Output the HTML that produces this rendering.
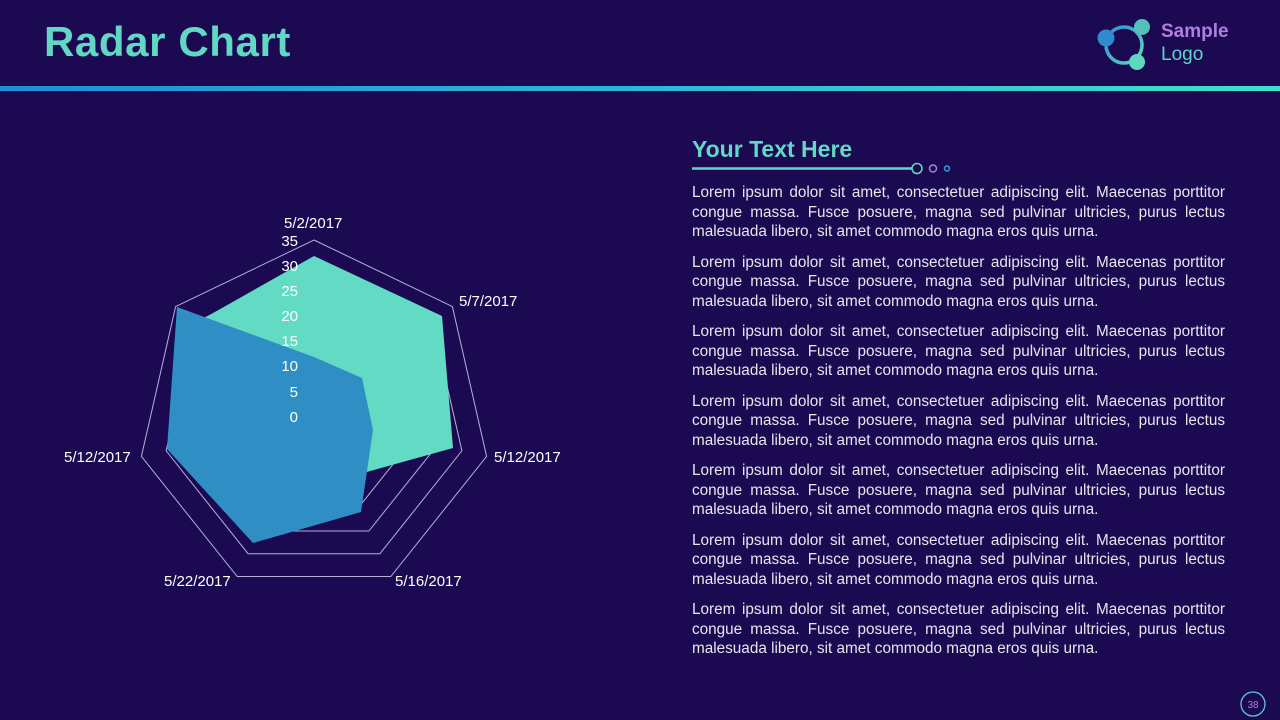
<!DOCTYPE html>
<html><head><meta charset="utf-8"><style>
html,body{margin:0;padding:0}
body{width:1280px;height:720px;background:#1b0a52;position:relative;overflow:hidden;font-family:"Liberation Sans",sans-serif}
.title{position:absolute;left:44px;top:18px;font-size:42px;font-weight:bold;color:#62d8c4;letter-spacing:0.6px}
.bar{position:absolute;left:0;top:86px;width:1280px;height:5px;background:linear-gradient(90deg,#1d8fd2,#2fc0d8 60%,#3fe0cc)}
.h2{position:absolute;left:692px;top:136px;font-size:23px;font-weight:bold;color:#62d8c4}
.txt{position:absolute;left:692px;top:183px;width:533px;color:#e6e6ee;font-size:15.3px;line-height:19.5px}
.p{margin-bottom:11px}
.l{display:block;text-align:justify;text-align-last:justify;white-space:nowrap}
.l.e{text-align-last:left}
</style></head><body>
<div class="title">Radar Chart</div>
<div class="bar"></div>
<svg style="position:absolute;left:1095px;top:14px" width="60" height="60" viewBox="0 0 60 60">
<defs><linearGradient id="g" x1="0" y1="0" x2="1" y2="1"><stop offset="0" stop-color="#2f8fd0"/><stop offset="1" stop-color="#5fd8c0"/></linearGradient></defs>
<circle cx="29" cy="31" r="18" fill="none" stroke="url(#g)" stroke-width="3.5"/>
<circle cx="11" cy="24" r="8.5" fill="#2e8ccc"/>
<circle cx="47" cy="13" r="8" fill="#55c0b8"/>
<circle cx="42" cy="48" r="8" fill="#5fd8c0"/>
</svg>
<div style="position:absolute;left:1161px;top:21px;font-size:19px;font-weight:bold;color:#b07ee0">Sample</div>
<div style="position:absolute;left:1161px;top:44px;font-size:19px;color:#5fd3c8">Logo</div>

<div class="h2">Your Text Here</div>
<svg style="position:absolute;left:680px;top:160px" width="280" height="18">
<line x1="12" y1="8.5" x2="232" y2="8.5" stroke="#62d8c4" stroke-width="2.5"/>
<circle cx="237" cy="8.5" r="5" fill="none" stroke="#62d8c4" stroke-width="1.5"/>
<circle cx="253" cy="8.5" r="3.5" fill="none" stroke="#b07ee0" stroke-width="1.5"/>
<circle cx="267" cy="8.5" r="2.5" fill="none" stroke="#2f9fd8" stroke-width="1.5"/>
</svg>

<div class="txt">
<div class="p"><span class="l">Lorem ipsum dolor sit amet, consectetuer adipiscing elit. Maecenas porttitor</span><span class="l">congue massa. Fusce posuere, magna sed pulvinar ultricies, purus lectus</span><span class="l e">malesuada libero, sit amet commodo magna eros quis urna.</span></div>
<div class="p"><span class="l">Lorem ipsum dolor sit amet, consectetuer adipiscing elit. Maecenas porttitor</span><span class="l">congue massa. Fusce posuere, magna sed pulvinar ultricies, purus lectus</span><span class="l e">malesuada libero, sit amet commodo magna eros quis urna.</span></div>
<div class="p"><span class="l">Lorem ipsum dolor sit amet, consectetuer adipiscing elit. Maecenas porttitor</span><span class="l">congue massa. Fusce posuere, magna sed pulvinar ultricies, purus lectus</span><span class="l e">malesuada libero, sit amet commodo magna eros quis urna.</span></div>
<div class="p"><span class="l">Lorem ipsum dolor sit amet, consectetuer adipiscing elit. Maecenas porttitor</span><span class="l">congue massa. Fusce posuere, magna sed pulvinar ultricies, purus lectus</span><span class="l e">malesuada libero, sit amet commodo magna eros quis urna.</span></div>
<div class="p"><span class="l">Lorem ipsum dolor sit amet, consectetuer adipiscing elit. Maecenas porttitor</span><span class="l">congue massa. Fusce posuere, magna sed pulvinar ultricies, purus lectus</span><span class="l e">malesuada libero, sit amet commodo magna eros quis urna.</span></div>
<div class="p"><span class="l">Lorem ipsum dolor sit amet, consectetuer adipiscing elit. Maecenas porttitor</span><span class="l">congue massa. Fusce posuere, magna sed pulvinar ultricies, purus lectus</span><span class="l e">malesuada libero, sit amet commodo magna eros quis urna.</span></div>
<div class="p"><span class="l">Lorem ipsum dolor sit amet, consectetuer adipiscing elit. Maecenas porttitor</span><span class="l">congue massa. Fusce posuere, magna sed pulvinar ultricies, purus lectus</span><span class="l e">malesuada libero, sit amet commodo magna eros quis urna.</span></div>
</div>

<svg style="position:absolute;left:0;top:0" width="1280" height="720">
<g fill="none" stroke="#b8b0d8" stroke-width="1">
<polygon points="314,240 452.4,306.6 486.6,456.4 390.8,576.5 237.2,576.5 141.4,456.4 175.6,306.6"/>
<polygon points="314,265.3 432.6,322.4 461.9,450.8 379.9,553.7 248.1,553.7 166.1,450.8 195.4,322.4"/>
<polygon points="314,290.6 412.9,338.2 437.3,445.2 368.9,531 259.1,531 190.7,445.2 215.1,338.2"/>
<polygon points="314,315.9 393.1,354.0 412.7,439.6 357.9,508.2 270.1,508.2 215.3,439.6 234.9,354.0"/>
<polygon points="314,341.1 373.3,369.7 388.0,433.9 346.9,485.4 281.1,485.4 240.0,433.9 254.7,369.7"/>
</g>
<polygon points="314,256 442,316 453,448 345,478 280,470 240,400 206,317" fill="#63dbc4"/>
<polygon points="177,307 314,357 362,378 373,430 361,512 253,543 167,449" fill="#2f8fc4"/>
<g fill="#fff" font-family="Liberation Sans,sans-serif" font-size="15" text-anchor="end">
<text x="298" y="246">35</text><text x="298" y="271">30</text><text x="298" y="296">25</text><text x="298" y="321">20</text><text x="298" y="346">15</text><text x="298" y="371">10</text><text x="298" y="397">5</text><text x="298" y="422">0</text>
</g>
<g fill="#fff" font-family="Liberation Sans,sans-serif" font-size="15">
<text x="284" y="228">5/2/2017</text>
<text x="459" y="306">5/7/2017</text>
<text x="494" y="462">5/12/2017</text>
<text x="395" y="586">5/16/2017</text>
<text x="164" y="586">5/22/2017</text>
<text x="64" y="462">5/12/2017</text>
</g>
<circle cx="1253" cy="704" r="12" fill="none" stroke="#5fc8d8" stroke-width="1.3"/>
<text x="1253" y="708" fill="#b07ee0" font-family="Liberation Sans,sans-serif" font-size="10" text-anchor="middle">38</text>
</svg>
</body></html>
